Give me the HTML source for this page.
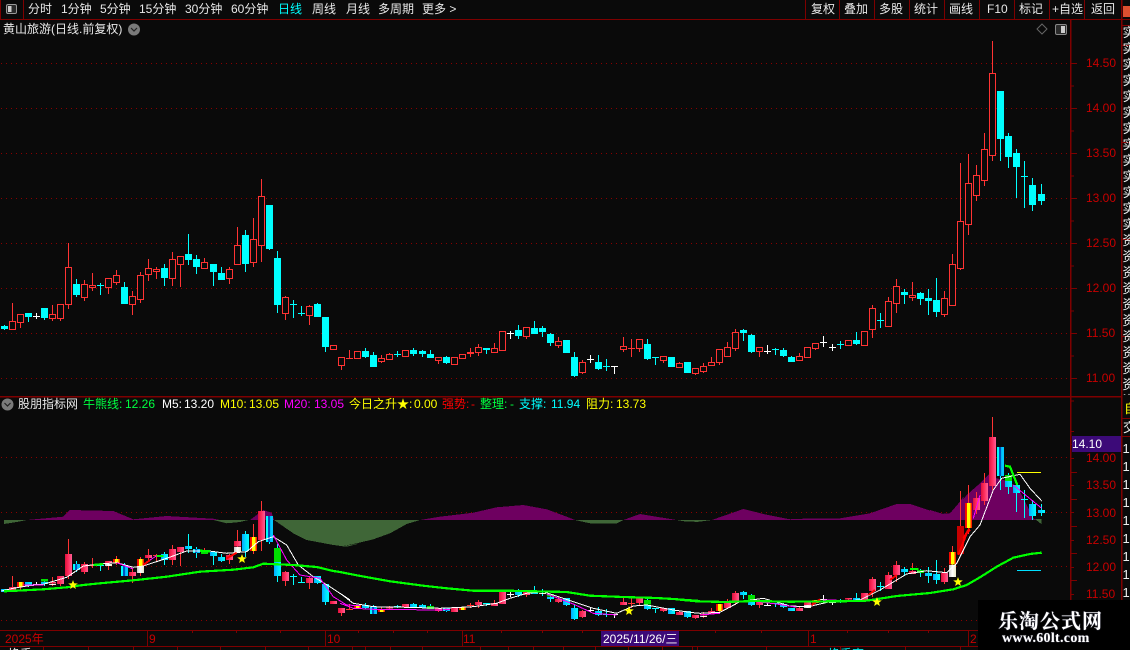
<!DOCTYPE html>
<html lang="zh"><head><meta charset="utf-8"><title>黄山旅游</title>
<style>
html,body{margin:0;padding:0;background:#0a0a0a}
#p{position:relative;width:1130px;height:650px;overflow:hidden;background:#0a0a0a;font:12px/14px "Liberation Sans","WenQuanYi Zen Hei","Noto Sans CJK SC",sans-serif;color:#e8e8e8}
#p span,#p div.t{position:absolute;white-space:nowrap}
svg{position:absolute;left:0;top:0}
.a{color:#c80000}
.w{color:#fff}.g{color:#00ff40}.y{color:#ffff00}.m{color:#ff00ff}.r{color:#ff0000}.c{color:#00ffff}
#side{position:absolute;left:1122.5px;top:25px;width:8px;height:370px;overflow:hidden;line-height:16px;font-size:13px;color:#eee;word-break:break-all;white-space:normal}
#side2{position:absolute;left:1122.5px;top:440px;width:8px;height:160px;overflow:hidden;line-height:18px;font-size:13px;color:#eee;white-space:normal}
#wm{position:absolute;left:978px;top:600px;width:152px;height:50px;background:#000}
#wm b{position:absolute;white-space:nowrap;color:#fff}
</style></head><body><div id="p">
<svg id="s" width="1130" height="650" shape-rendering="crispEdges"></svg>

<span style="left:28px;top:2px">分时</span>
<span style="left:61px;top:2px">1分钟</span>
<span style="left:100px;top:2px">5分钟</span>
<span style="left:139px;top:2px">15分钟</span>
<span style="left:185px;top:2px">30分钟</span>
<span style="left:231px;top:2px">60分钟</span>
<span class="c" style="left:278px;top:2px">日线</span>
<span style="left:312px;top:2px">周线</span>
<span style="left:346px;top:2px">月线</span>
<span style="left:378px;top:2px">多周期</span>
<span style="left:422px;top:2px">更多 &gt;</span>

<span style="left:811px;top:2px">复权</span>
<span style="left:844px;top:2px">叠加</span>
<span style="left:879px;top:2px">多股</span>
<span style="left:914px;top:2px">统计</span>
<span style="left:949px;top:2px">画线</span>
<span style="left:987px;top:2px">F10</span>
<span style="left:1019px;top:2px">标记</span>
<span style="left:1052px;top:2px">+自选</span>
<span style="left:1091px;top:2px">返回</span>

<span style="left:3px;top:22px;font-size:12px">黄山旅游(日线.前复权)</span>

<span class="a" style="left:1086px;top:56px">14.50</span>
<span class="a" style="left:1086px;top:101px">14.00</span>
<span class="a" style="left:1086px;top:146px">13.50</span>
<span class="a" style="left:1086px;top:191px">13.00</span>
<span class="a" style="left:1086px;top:236px">12.50</span>
<span class="a" style="left:1086px;top:281px">12.00</span>
<span class="a" style="left:1086px;top:326px">11.50</span>
<span class="a" style="left:1086px;top:371px">11.00</span>

<span style="left:18px;top:397px">股朋指标网</span>
<span class="g" style="left:83px;top:397px">牛熊线:</span><span class="g" style="left:125px;top:397px">12.26</span>
<span class="w" style="left:162px;top:397px">M5:</span><span class="w" style="left:184px;top:397px">13.20</span>
<span class="y" style="left:220px;top:397px">M10:</span><span class="y" style="left:249px;top:397px">13.05</span>
<span class="m" style="left:284px;top:397px">M20:</span><span class="m" style="left:314px;top:397px">13.05</span>
<span class="y" style="left:349px;top:397px">今日之升★:</span><span class="y" style="left:414px;top:397px">0.00</span>
<span class="r" style="left:442px;top:397px">强势:</span><span class="r" style="left:471px;top:397px">-</span>
<span class="g" style="left:480px;top:397px">整理:</span><span class="g" style="left:510px;top:397px">-</span>
<span class="c" style="left:519px;top:397px">支撑:</span><span class="c" style="left:551px;top:397px">11.94</span>
<span class="y" style="left:586px;top:397px">阻力:</span><span class="y" style="left:616px;top:397px">13.73</span>

<span class="w" style="left:1072px;top:437px">14.10</span>
<span class="a" style="left:1086px;top:451px">14.00</span>
<span class="a" style="left:1086px;top:478px">13.50</span>
<span class="a" style="left:1086px;top:506px">13.00</span>
<span class="a" style="left:1086px;top:533px">12.50</span>
<span class="a" style="left:1086px;top:560px">12.00</span>
<span class="a" style="left:1086px;top:587px">11.50</span>

<span class="a" style="left:5px;top:632px">2025年</span>
<span class="a" style="left:149px;top:632px">9</span>
<span class="a" style="left:327px;top:632px">10</span>
<span class="a" style="left:463px;top:632px">11</span>
<span class="a" style="left:810px;top:632px">1</span>
<span class="a" style="left:970px;top:632px">2</span>
<span class="w" style="left:603px;top:632px">2025/11/26/三</span>

<span style="left:8px;top:647px;color:#eee">换手</span>
<span style="left:828px;top:647px;color:#0ee">换手率</span>

<div id="side">实实实实实实实实实实实实实资资资资资资资资资资资资资资资资资外外外换换换手手手</div>
<div class="t y" style="left:1124px;top:402px;width:7px;overflow:hidden;font-size:13px">自</div>
<div class="t" style="left:1123px;top:421px;width:8px;overflow:hidden;font-size:13px">交</div>
<div id="side2">1 1 1 1 1 1 1 1 1</div>

<div id="wm">
<b style="left:20px;top:8px;font:bold 20px/24px 'Noto Serif CJK SC','Noto Sans CJK SC',serif;letter-spacing:1px;text-shadow:0 0 1px #88a">乐淘公式网</b>
<b style="left:24px;top:31px;font:bold 14px/16px 'Liberation Serif',serif;letter-spacing:.3px;text-shadow:0 0 1px #88a">www.60lt.com</b>
</div>

<script>
var S=[];
function L(a,b,c,d,col,w){S.push('<line x1="'+a+'" y1="'+b+'" x2="'+c+'" y2="'+d+'" stroke="'+col+'"'+(w?' stroke-width="'+w+'"':'')+'/>')}
function R(x,y,w,h,f,st){S.push('<rect x="'+x+'" y="'+y+'" width="'+w+'" height="'+h+'" fill="'+f+'"'+(st?' stroke="'+st+'"':'')+'/>')}
function conv(x0,y0,a){var o=[];for(var i=0;i<a.length;i+=2)o.push([x0+a[i]/3,y0+a[i+1]/3]);return o}
function PL(p,col,w){S.push('<polyline fill="none" stroke="'+col+'" stroke-width="'+w+'" points="'+p.map(function(q){return q[0].toFixed(1)+','+q[1].toFixed(1)}).join(' ')+'"/>')}
function PG(p,col){S.push('<polygon fill="'+col+'" points="'+p.map(function(q){return q[0].toFixed(1)+','+q[1].toFixed(1)}).join(' ')+'"/>')}
var FR='#7e0000',BG='#0a0a0a';

S.push('<defs>'+
'<linearGradient id="pk"><stop offset="0" stop-color="#e0103c"/><stop offset=".5" stop-color="#ff3060"/><stop offset="1" stop-color="#ff5f96"/></linearGradient>'+
'<linearGradient id="cy"><stop offset="0" stop-color="#00a8ff"/><stop offset=".45" stop-color="#00d8ff"/><stop offset="1" stop-color="#00ffff"/></linearGradient>'+
'<linearGradient id="ye"><stop offset="0" stop-color="#f00000"/><stop offset=".3" stop-color="#ff2000"/><stop offset=".31" stop-color="#ffff00"/><stop offset=".75" stop-color="#ffff00"/><stop offset=".76" stop-color="#ff2000"/><stop offset="1" stop-color="#ff2000"/></linearGradient>'+
'<linearGradient id="wh"><stop offset="0" stop-color="#c8c8c8"/><stop offset=".5" stop-color="#ffffff"/><stop offset="1" stop-color="#e8e8c8"/></linearGradient>'+
'<linearGradient id="st"><stop offset="0" stop-color="#00ffff"/><stop offset=".3" stop-color="#00ffff"/><stop offset=".31" stop-color="#0050c0"/><stop offset=".6" stop-color="#0050c0"/><stop offset=".61" stop-color="#00c8ff"/><stop offset="1" stop-color="#00c8ff"/></linearGradient>'+
'</defs>');

/* grid */
var gy=[63.5,108.5,153.5,198.5,243.5,288.5,333.5,378.5];
gy.forEach(function(y){S.push('<line x1="1" y1="'+y+'" x2="1070" y2="'+y+'" stroke="#8a0000" stroke-dasharray="1 4"/>')});
[457.5,512.5,566.5,620.5].forEach(function(y){S.push('<line x1="1" y1="'+y+'" x2="1070" y2="'+y+'" stroke="#8a0000" stroke-dasharray="1 4"/>')});

/* candle data: colour, wick top, body top, body bottom, wick bottom (zoomed coords) */
var seg=[[160,"c,495,497,503,510 r,430,484,506,506 r,463,463,485,503 c,459,459,468,486 w,460,469,469,477 c,444,444,471,480 r,435,463,475,482 r,433,433,473,482 r,250,322,433,446 c,358,373,402,410 r,360,373,410,422 r,340,376,380,392 c,370,376,376,405 r,355,355,380,402 r,331,346,365,375 c,366,381,429,429 r,393,409,431,465 r,336,346,416,429 r,297,325,341,362 r,321,328,332,357 c,312,324,351,378 r,277,298,353,378 r,289,289,311,380 c,222,282,297,315 c,285,297,318,342 r,294,307,323,323 c,312,312,333,378 c,321,339,357,360 r,321,328,353,372 r,201,256,311,315 c,210,225,309,336 r,174,238,305,321 r,57,109,254,306 c,135,135,264,270 c,273,294,432,459 r,408,411,458,480 c,420,433,433,474 c,438,460,460,468 r,435,439,464,495 c,429,432,468,471"],
[300,"c,51,51,138,156 r,136,136,147,147 r,172,172,194,210 r,150,173,173,177 r,154,154,173,173 c,144,153,168,174 c,156,165,198,198 r,165,174,183,189 r,160,163,177,180 c,153,161,161,171 r,151,151,167,171 c,144,151,159,168 c,150,153,159,171 c,150,162,171,171 r,172,172,179,192 c,168,171,186,192 r,172,172,192,192 r,163,163,173,177 r,144,156,160,171 r,132,141,156,168 c,144,144,147,162 r,129,144,156,156 r,93,93,150,150 w,93,99,99,117 c,75,90,105,117 r,81,81,107,117 c,63,84,99,99 c,78,84,93,111 c,99,102,126,138 r,111,123,135,144 c,120,120,156,159 c,156,171,225,231 r,180,186,216,222 w,165,178,178,189 c,165,186,204,210 c,177,199,199,213 w,198,198,198,222 r,111,138,147,156 r,117,144,144,171 r,118,118,143,156"],
[270,"c,207,222,264,270 c,262,262,262,285 r,259,259,269,279 c,261,261,288,288 r,276,280,290,291 c,276,276,306,309 r,295,295,308,315 r,279,289,302,309 r,261,277,285,288 r,238,238,276,285 r,216,232,258,261 r,177,187,233,243 c,177,180,186,213 c,192,195,243,249 r,232,232,242,261 w,225,243,243,252 c,234,237,237,255 c,234,240,255,261 c,258,261,273,276 r,249,259,269,273 r,232,232,261,261 r,220,220,233,240 w,198,216,216,231 w,222,231,231,243 c,213,223,223,237 r,211,211,224,224 c,186,210,219,225 r,184,184,224,224 r,106,115,176,204 c,129,151,151,174 r,82,94,167,168 r,27,49,98,129 c,57,66,72,102 r,36,76,82,93 c,66,69,84,105 c,57,84,90,135 c,24,90,123,141 r,63,85,131,141"],
[30,"r,672,702,825,825 r,400,574,714,720 r,372,460,583,615 r,405,436,496,512 r,309,358,451,468 r,33,130,376,392 c,183,183,323,392 c,309,318,377,413 c,357,369,407,503 c,393,439,439,533 c,444,465,521,542 c,462,492,509,524"]];
var C=[];
seg.forEach(function(s){s[1].split(' ').forEach(function(t){var a=t.split(',');C.push({c:a[0],wt:s[0]+a[1]/3,bt:s[0]+a[2]/3,bb:s[0]+a[3]/3,wb:s[0]+a[4]/3})})});
var COL={r:'#ff3333',c:'#00ffff',w:'#ffffff'};
function X(i){return Math.floor(4+i*8.039)+.5}

/* upper */
C.forEach(function(k,i){var x=X(i),col=COL[k.c],bt=Math.round(k.bt)+.5,bb=Math.round(k.bb)+.5;
 L(x,Math.round(k.wt),x,Math.round(k.wb),col);
 if(bb-bt<1){L(x-3.5,bt,x+3.5,bt,col,k.c=='w'?1:1)}
 else if(k.c=='r'){R(x-3,bt,6,bb-bt,BG,col)}
 else{R(x-3.5,bt-.5,7,bb-bt+1,col)}
});

/* lower oscillator */
var pur=conv(0,490,[80,90,190,80,210,60,340,63,400,88,500,78,640,86,660,90]);
pur=[[27,520]].concat(pur).concat([[220,520]]);
PG(pur,'#6e0060');
PG(conv(0,490,[12,90,12,102,50,96,80,90]),'#3f6637');
PG(conv(0,490,[640,90,680,100,720,96,745,90]),'#3f6637');
PG(conv(0,490,[750,90,770,75,790,60,815,68,822,90]),'#6e0060');
var g1=conv(0,490,[822,90,880,130,920,150,1000,165,1040,170,1080,160]).concat(conv(340,500,[0,140,50,130,100,118,150,100,200,72,240,60]));
PG(g1,'#3f6637');
PG(conv(340,500,[240,60,300,50,400,38,470,22,550,15,620,28,680,50,705,60]),'#6e0060');
PG(conv(340,500,[705,60,750,70,830,70,850,60]),'#3f6637');
PG(conv(340,500,[850,60,900,42,960,52,1010,60]),'#6e0060');
PG(conv(340,500,[1010,60,1040,65,1080,62,1100,60]),'#3f6637');
PG(conv(680,500,[0,60,50,66,95,60]),'#3f6637');
PG(conv(680,500,[95,60,130,48,190,27,250,42,330,58,400,55,480,55,570,40,650,12,690,12,780,42,810,40,840,5,850,-10,850,60]),'#6e0060');
PG(conv(930,395,[0,375,0,345,50,360,80,340,110,300,150,265,180,235,200,250,240,260,270,290,310,370,320,375]),'#6e0060');
PG(conv(930,395,[315,372,335,372,335,388]),'#3f6637');

/* lower candles */
var T={2:'y',5:'G',6:'W',9:'b',13:'W',14:'y',15:'b',17:'m',24:'b',25:'g',29:'W',31:'y',33:'b',34:'G',44:'y',46:'b',47:'y',48:'W',53:'g',55:'b',57:'y',67:'W',68:'G',80:'G',87:'W',89:'y',93:'G',100:'W',101:'y',105:'W',114:'g',118:'m',119:'d',120:'y',124:'b',125:'G'};
function Y(y){return 430.8+(y-63.5)*.6044}
C.forEach(function(k,i){var x=X(i),t=T[i]||k.c,bt=Math.round(Y(k.bt)),bb=Math.round(Y(k.bb));
 if(bb-bt<3)bb=bt+3;
 var wc=k.c=='r'?'#ff3333':(k.c=='c'?'#00ffff':'#fff');
 L(x,Math.round(Y(k.wt)),x,Math.round(Y(k.wb)),wc);
 var bx=x-3.5,h=bb-bt,mid=bt+Math.round(h/2);
 if(bb-bt==3&&k.bb-k.bt<1.5){L(x-3.5,bt+.5,x+3.5,bt+.5,wc);return}
 if(t=='r')R(bx,bt,7,h,'url(#pk)');
 else if(t=='c')R(bx,bt,7,h,'url(#cy)');
 else if(t=='w')R(bx,bt,7,h,'url(#wh)');
 else if(t=='y')R(bx,bt,7,h,'url(#ye)');
 else if(t=='m'){R(bx,bt,7,h/2,'url(#ye)');R(bx,mid,7,bb-mid,'url(#wh)')}
 else if(t=='W'){R(bx,bt,7,h/2,'url(#pk)');R(bx,mid,7,bb-mid,'url(#wh)')}
 else if(t=='g')R(bx,bt,7,h,'#00e000');
 else if(t=='G'){R(bx,bt,7,h/2,'#00e000');R(bx,mid,7,bb-mid,'url(#cy)')}
 else if(t=='b')R(bx,bt,7,h,'url(#st)');
 else if(t=='d')R(bx,bt,7,h,'#c80000');
});

/* MA white */
var wl=conv(0,490,[4,303,40,295,80,288,130,283,200,262,250,228,300,222,350,218,400,232,430,228,500,205,560,183,620,182,680,190,740,185,775,155,820,140,860,165,895,225,940,260,990,290,1050,330,1020,310])
wl.pop();
wl=wl.concat(conv(340,500,[0,280,40,310,100,320,200,322,300,325,400,320,470,310,510,295,560,280,610,275,640,285,700,305,760,325,830,340,880,318,920,315,1000,330,1060,338]));
wl=wl.concat(conv(680,500,[60,340,120,337,180,305,250,295,330,318,385,320,450,305,540,300,600,270,680,222,740,212,800,218,830,190,870,110,900,75]));
wl=wl.concat(conv(930,395,[150,390,190,285,215,250,270,238,300,280,335,318]));
PL(wl,'#ffffff',1);

/* magenta */
PL(conv(0,490,[820,135,860,210,900,255,960,265,1000,320,1040,345,1080,347]),'#ff00ff',1);
PL(conv(0,490,[70,285,130,285]),'#ff00ff',1);
PL(conv(0,490,[350,218,400,237]),'#ff00ff',1);
PL(conv(0,490,[450,210,470,197]),'#ff00ff',1);
PL(conv(340,500,[0,310,40,325,100,328,300,330,330,328]),'#ff00ff',1);
PL(conv(340,500,[620,282,700,312,760,340,830,345]),'#ff00ff',1);
PL(conv(680,500,[60,345,120,340]),'#ff00ff',1);
PL(conv(680,500,[230,305,290,312,350,322]),'#ff00ff',1);
PL(conv(680,500,[430,300,540,302]),'#ff00ff',1);
PL(conv(930,395,[130,370,150,300]),'#ff00ff',1);
PL(conv(930,395,[250,270,335,340]),'#ff00ff',1);

/* red bits */
[[0,490,[430,225,450,210]],[0,490,[680,205,710,188]],[680,500,[395,315,420,298]],[680,500,[630,240,650,225]],[680,500,[565,285,585,270]],[680,500,[835,165,860,100,870,90]],[930,395,[100,430,118,400]]].forEach(function(a){PL(conv(a[0],a[1],a[2]),'#ff0000',2)});

/* bold green line */
var gl=conv(0,490,[12,304,50,302,130,298,200,292,250,285,300,280,400,271,500,260,600,245,700,239,760,232,790,221,880,225,950,231,1000,243,1020,246]);
gl=gl.concat(conv(340,500,[0,216,50,226,100,235,150,244,250,257,320,265,400,272,500,272,680,276,750,287,850,291,950,294,1000,297,1080,303]));
gl=gl.concat(conv(680,500,[0,299,50,304,135,306,220,303,330,305,550,303,580,299,650,288,750,279,820,268,860,255,900,232]));
gl=gl.concat(conv(930,395,[200,515,250,488,300,477,335,473]));
PL(gl,'#00ff00',2.2);
[[0,490,[280,225,310,222]],[0,490,[470,198,490,198]],[0,490,[600,182,630,184]],[680,500,[690,207,715,207]],[930,395,[225,212,240,215,262,270]]].forEach(function(a){PL(conv(a[0],a[1],a[2]),'#00ff00',2.2)});

/* level lines */
L(1017,472.5,1041,472.5,'#ffff00');
L(1017,570.5,1041,570.5,'#00e0ff');

/* stars */
function star(cx,cy,r){var p=[];for(var i=0;i<10;i++){var a=-Math.PI/2+i*Math.PI/5,q=i%2?r*.42:r;p.push([cx+q*Math.cos(a),cy+q*Math.sin(a)])}S.push('<polygon shape-rendering="auto" fill="#ffff00" points="'+p.map(function(q){return q[0].toFixed(1)+','+q[1].toFixed(1)}).join(' ')+'"/>')}
[[73,585],[242,559],[629,611],[877,602],[958,582]].forEach(function(a){star(a[0],a[1],5)});

/* frame */
L(0,19.5,1130,19.5,FR,1);
L(0,396.5,1121,396.5,FR,1.5);
L(0,630.5,1121,630.5,FR);
L(0,646.5,1121,646.5,FR);
L(1070.5,19,1070.5,646,FR,1.5);
L(1121.5,0,1121.5,650,FR,1.5);
L(.5,0,.5,19,FR);
L(23.5,0,23.5,19,FR);
[805,839,874,909,944,979,1014,1049,1084].forEach(function(x){L(x+.5,0,x+.5,19,FR)});
[45,142,239,336,418,436].forEach(function(y){L(1122,y+.5,1130,y+.5,FR)});
L(1122,25.5,1130,25.5,FR);
R(1123,6,7,11,'#e05030');
/* axis ticks */
gy.forEach(function(y){L(1071,y,1077,y,FR);L(1071,y+22.5,1074,y+22.5,FR)});
for(var i=0;i<14;i++){var y=Math.round(430.8+i*13.6)+.5;L(1071,y,i%2?1077:1074,y,FR)}
[147,325,462,808,968].forEach(function(x){L(x+.5,630,x+.5,646,FR)});
[192,236,280,358,393,427,501,542,582,715,761,847,888,928].forEach(function(x){L(x+.5,631,x+.5,633,FR)});
[43,88,133,177,220,265,308,352,365,390,422,480,508,533,563,595,628,662,692,697,766,840,905,960].forEach(function(x){L(x+.5,647,x+.5,650,FR)});
R(601,631,78,15,'#3c0a78');
R(1072,436,49,16,'#3c0a78');

/* icons */
S.push('<g shape-rendering="auto">'+
'<rect x="6.5" y="4.5" width="10" height="9" rx="1.5" fill="#2a2a2a" stroke="#999"/><rect x="8" y="6" width="3.5" height="6" fill="#ccc"/>'+
'<circle cx="134" cy="29.5" r="6" fill="#7a7a7a"/><path d="M131 28l3 3 3-3" fill="none" stroke="#222" stroke-width="1.2"/>'+
'<path d="M1042 24l5 5-5 5-5-5z" fill="none" stroke="#666"/>'+
'<rect x="1055.5" y="24.5" width="11" height="10" rx="1.5" fill="#2a2a2a" stroke="#888"/><rect x="1061" y="26" width="4" height="7" fill="#ccc"/>'+
'<circle cx="7.5" cy="404.5" r="6" fill="#7a7a7a"/><path d="M4.5 403l3 3 3-3" fill="none" stroke="#222" stroke-width="1.2"/>'+
'</g>');
document.getElementById('s').innerHTML=S.join('');
</script>
</div></body></html>
